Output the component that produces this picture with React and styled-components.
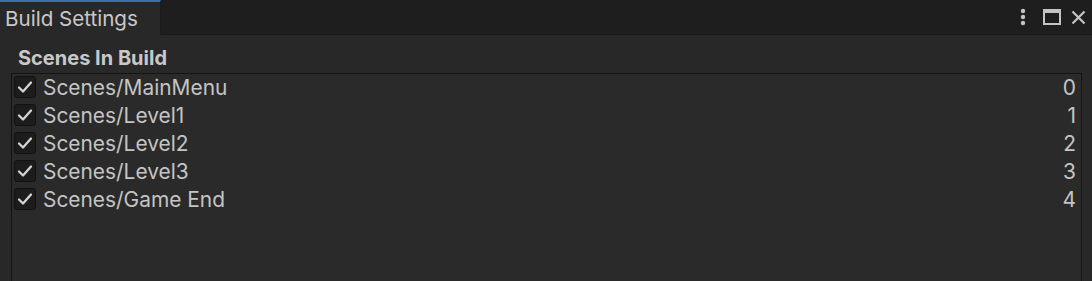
import React from "react";
import styled, { createGlobalStyle } from "styled-components";

const GlobalStyle = createGlobalStyle`
  html, body {
    margin: 0;
    padding: 0;
    background: #282828;
    overflow: hidden;
  }
  body {
    font-family: Inter, "Noto Sans", sans-serif;
    color: #c4c4c4;
  }
`;

const Window = styled.div`
  width: 1092px;
  height: 281px;
  display: flex;
  flex-direction: column;
  background: #282828;
`;

const TabBar = styled.div`
  height: 35px;
  display: flex;
  align-items: stretch;
  background: #1e1e1e;
  border-bottom: 1px solid #1a1a1a;
  box-sizing: border-box;
`;

const Tab = styled.div`
  width: 161px;
  box-sizing: border-box;
  padding-left: 5px;
  display: flex;
  align-items: center;
  background: #282828;
  border-top: 2px solid #3b6fa8;
  border-right: 1px solid #1a1a1a;
  font-size: 20.6px;
  color: #c8c8c8;
  margin-bottom: -1px;
`;

const TabActions = styled.div`
  margin-left: auto;
  display: flex;
  align-items: center;
  padding-right: 6px;
  color: #c4c4c4;
`;

const ActionIcon = styled.span`
  display: flex;
  margin-left: ${(p) => p.gap || 0}px;
`;

const Body = styled.div`
  flex: 1;
  padding: 12px 11px 0 11px;
  display: flex;
  flex-direction: column;
  min-height: 0;
`;

const SectionTitle = styled.div`
  font-size: 20px;
  font-weight: 700;
  color: #c8c8c8;
  padding-left: 7px;
  height: 26px;
  line-height: 22px;
`;

const SceneList = styled.div`
  flex: 1;
  width: 1071px;
  box-sizing: border-box;
  border: 1px solid #141414;
  border-bottom: none;
  background: #2a2a2a;
`;

const Row = styled.div`
  height: 28px;
  display: flex;
  align-items: center;
  padding: 0 5px 0 2px;
  gap: 7px;
  font-size: 20.9px;
  color: #c4c4c4;
  margin-top: ${(p) => (p.first ? -1 : 0)}px;
`;

const Check = styled.div`
  width: 22px;
  height: 22px;
  box-sizing: border-box;
  border-radius: 3px;
  background: #1c1c1c;
  border: 1px solid #111111;
  display: flex;
  align-items: center;
  justify-content: center;
`;

const SceneName = styled.span`
  flex: 1;
`;

const SceneIndex = styled.span`
  text-align: right;
`;

const scenes = [
  "Scenes/MainMenu",
  "Scenes/Level1",
  "Scenes/Level2",
  "Scenes/Level3",
  "Scenes/Game End",
];

function CheckMark() {
  return (
    <svg width="16" height="14" viewBox="0 0 16 14">
      <path
        d="M2 7.5 L6 11.5 L14 2.5"
        fill="none"
        stroke="#d4d4d4"
        strokeWidth="2.3"
        strokeLinecap="round"
        strokeLinejoin="round"
      />
    </svg>
  );
}

function MenuIcon() {
  return (
    <svg width="8" height="18" viewBox="0 0 8 18">
      <circle cx="4" cy="3" r="2.2" fill="#c4c4c4" />
      <circle cx="4" cy="9" r="2.2" fill="#c4c4c4" />
      <circle cx="4" cy="15" r="2.2" fill="#c4c4c4" />
    </svg>
  );
}

function MaximizeIcon() {
  return (
    <svg width="18" height="16" viewBox="0 0 18 16">
      <rect x="1" y="1" width="16" height="14" fill="none" stroke="#c4c4c4" strokeWidth="2" />
      <rect x="1" y="1" width="16" height="3" fill="#c4c4c4" />
    </svg>
  );
}

function CloseIcon() {
  return (
    <svg width="15" height="15" viewBox="0 0 15 15">
      <path d="M1.5 1.5 L13.5 13.5 M13.5 1.5 L1.5 13.5" stroke="#c4c4c4" strokeWidth="2.2" />
    </svg>
  );
}

export default function App() {
  return (
    <>
      <GlobalStyle />
      <Window>
        <TabBar>
          <Tab>Build Settings</Tab>
          <TabActions>
            <ActionIcon>
              <MenuIcon />
            </ActionIcon>
            <ActionIcon gap={16}>
              <MaximizeIcon />
            </ActionIcon>
            <ActionIcon gap={10}>
              <CloseIcon />
            </ActionIcon>
          </TabActions>
        </TabBar>
        <Body>
          <SectionTitle>Scenes In Build</SectionTitle>
          <SceneList>
            {scenes.map((name, i) => (
              <Row key={name} first={i === 0}>
                <Check>
                  <CheckMark />
                </Check>
                <SceneName>{name}</SceneName>
                <SceneIndex>{i}</SceneIndex>
              </Row>
            ))}
          </SceneList>
        </Body>
      </Window>
    </>
  );
}
